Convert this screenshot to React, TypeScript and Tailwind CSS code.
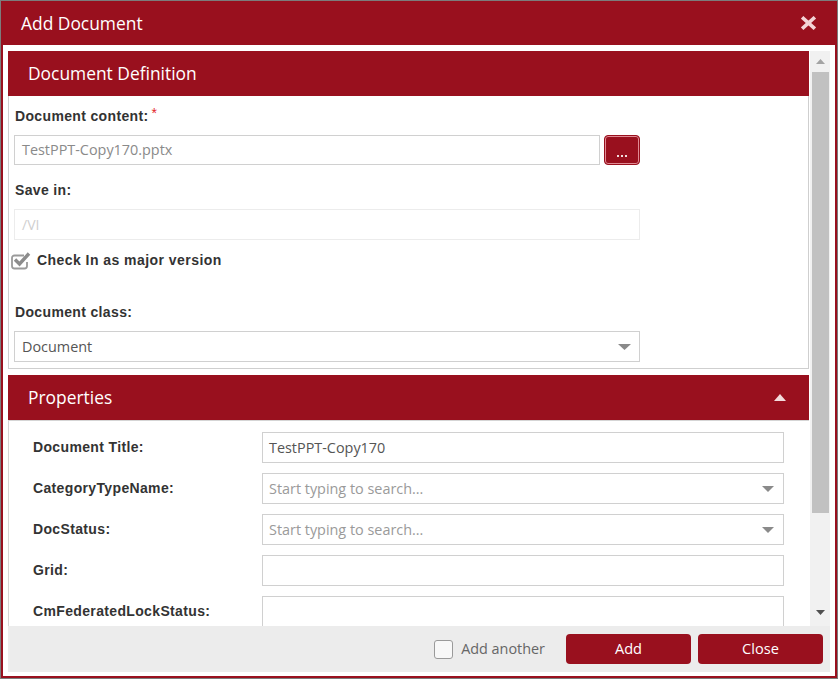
import React from "react";

const RED = "#99101e";

function Tri({ down = true, color = "#8a8a8a", w = 12, h = 6 }: { down?: boolean; color?: string; w?: number; h?: number }) {
  return (
    <svg width={w} height={h} viewBox={`0 0 ${w} ${h}`} className="block">
      {down ? (
        <polygon points={`0,0 ${w},0 ${w / 2},${h}`} fill={color} />
      ) : (
        <polygon points={`0,${h} ${w},${h} ${w / 2},0`} fill={color} />
      )}
    </svg>
  );
}

function Label({ children }: { children: React.ReactNode }) {
  return (
    <div className="h-[20px] flex items-center pl-[1px] text-[14px] font-bold text-[#333] tracking-[0.35px] [font-family:'Liberation_Sans',Arial,sans-serif]">
      {children}
    </div>
  );
}

function PropRow({ label, value, placeholder, dropdown }: { label: string; value?: string; placeholder?: string; dropdown?: boolean }) {
  return (
    <div className="flex items-center h-[31px]">
      <div className="w-[253px] shrink-0 pl-[24px] text-[14px] font-bold text-[#333] tracking-[0.35px] [font-family:'Liberation_Sans',Arial,sans-serif]">
        {label}
      </div>
      <div className="w-[522px] shrink-0 h-[31px] border border-[#d0d0d0] bg-white flex items-center pl-[6px] pr-[9px] [font-family:'Open_Sans',sans-serif] text-[14.4px]">
        <span className={"flex-1 " + (value ? "text-[#555]" : "text-[#9a9a9a]")}>{value ?? placeholder ?? ""}</span>
        {dropdown && <Tri color="#8a8a8a" w={12} h={6} />}
      </div>
    </div>
  );
}

export default function App() {
  return (
    <div className="w-[838px] h-[679px] border border-[#7c7c7c] bg-white flex flex-col overflow-hidden">
      {/* Title bar */}
      <div className="h-[44px] shrink-0 flex items-center justify-between pl-[20px] pr-[21px]" style={{ backgroundColor: RED }}>
        <span className="text-[17.4px] text-white [font-family:'Open_Sans',sans-serif]">Add Document</span>
        <svg width="15" height="14" viewBox="0 0 15 14" className="block">
          <g stroke="#f3d3d6" strokeWidth="3.6" strokeLinecap="square">
            <line x1="2.5" y1="2.5" x2="12.5" y2="11.5" />
            <line x1="12.5" y1="2.5" x2="2.5" y2="11.5" />
          </g>
        </svg>
      </div>

      {/* Body */}
      <div className="flex-1 flex flex-col bg-white border-x-2 border-b-2 border-[#99101e] pl-[5px] pr-[5px] pt-[6px] pb-[4px]">
        <div className="h-[575px] flex">
          {/* Content */}
          <div className="w-[802px] overflow-hidden flex flex-col">
            {/* Document Definition panel */}
            <div className="w-[801px]">
              <div className="h-[45px] flex items-center pl-[20px]" style={{ backgroundColor: RED }}>
                <span className="text-[17.4px] text-white [font-family:'Open_Sans',sans-serif]">Document Definition</span>
              </div>
              <div className="border-x border-b border-[#cfcfcf] pl-[5px] pt-[10px] pb-[6px]">
                <Label>
                  Document content:<span className="text-[#e3262b] font-normal text-[14px] relative top-[-3px] ml-[3px]">*</span>
                </Label>
                <div className="flex mt-[9px] gap-[4px]">
                  <div className="w-[586px] h-[30px] border border-[#d0d0d0] flex items-center pl-[7px] text-[14.4px] text-[#8a8a8a] [font-family:'Open_Sans',sans-serif]">
                    TestPPT-Copy170.pptx
                  </div>
                  <div className="w-[36px] h-[30px] rounded-[4px] border border-[#99101e] shadow-[inset_0_0_0_1px_#e08a93] flex items-end justify-center pb-[7px]" style={{ backgroundColor: RED }}>
                    <div className="flex gap-[2px]">
                      <span className="w-[2px] h-[2px] bg-[#f0dcdc] block" />
                      <span className="w-[2px] h-[2px] bg-[#f0dcdc] block" />
                      <span className="w-[2px] h-[2px] bg-[#f0dcdc] block" />
                    </div>
                  </div>
                </div>
                <div className="mt-[15px]">
                  <Label>Save in:</Label>
                </div>
                <div className="mt-[9px] w-[626px] h-[31px] border border-[#ececec] flex items-center pl-[7px] text-[14px] text-[#cfcfcf] [font-family:'Open_Sans',sans-serif]">
                  /VI
                </div>
                <div className="mt-[10px] h-[20px] flex items-center ml-[-4px]">
                  <svg width="22" height="20" viewBox="0 0 22 20" className="block">
                    <path d="M14 5.5 H4.5 a2.5 2.5 0 0 0 -2.5 2.5 v8 a2.5 2.5 0 0 0 2.5 2.5 h10 a2.5 2.5 0 0 0 2.5 -2.5 v-4" fill="none" stroke="#9a9a9a" strokeWidth="1.8" />
                    <polyline points="5,9.5 9.5,14 19,3.5" fill="none" stroke="#8c8c8c" strokeWidth="3.4" strokeLinejoin="miter" />
                  </svg>
                  <span className="ml-[5px] text-[14px] font-bold text-[#333] tracking-[0.45px] [font-family:'Liberation_Sans',Arial,sans-serif]">
                    Check In as major version
                  </span>
                </div>
                <div className="mt-[32px]">
                  <Label>Document class:</Label>
                </div>
                <div className="mt-[9px] w-[626px] h-[31px] border border-[#d0d0d0] flex items-center pl-[7px] pr-[8px] text-[14.4px] text-[#555] [font-family:'Open_Sans',sans-serif]">
                  <span className="flex-1">Document</span>
                  <Tri color="#8a8a8a" w={13} h={6} />
                </div>
              </div>
            </div>

            {/* Properties panel */}
            <div className="w-[801px] mt-[6px] flex-1 flex flex-col">
              <div className="h-[45px] shrink-0 flex items-center justify-between pl-[20px] pr-[23px]" style={{ backgroundColor: RED }}>
                <span className="text-[17.4px] text-white [font-family:'Open_Sans',sans-serif]">Properties</span>
                <Tri down={false} color="#f3dcdd" w={12} h={7} />
              </div>
              <div className="flex-1 border-t border-l border-[#d5d5d5] pt-[11px] flex flex-col gap-[10px]">
                <PropRow label="Document Title:" value="TestPPT-Copy170" />
                <PropRow label="CategoryTypeName:" placeholder="Start typing to search..." dropdown />
                <PropRow label="DocStatus:" placeholder="Start typing to search..." dropdown />
                <PropRow label="Grid:" />
                <PropRow label="CmFederatedLockStatus:" />
              </div>
            </div>
          </div>

          {/* Scrollbar */}
          <div className="w-[20px] bg-[#f1f1f1] flex flex-col items-center">
            <div className="h-[21px] w-full flex items-center justify-center">
              <Tri down={false} color="#a3a3a3" w={9} h={5} />
            </div>
            <div className="w-[17px] h-[441px] bg-[#c1c1c1] ml-[1px]" />
            <div className="flex-1" />
            <div className="h-[24px] w-full flex items-center justify-center pb-[3px]">
              <Tri color="#505050" w={9} h={5} />
            </div>
          </div>
        </div>

        {/* Footer */}
        <div className="h-[46px] bg-[#ececec] flex items-center justify-end pr-[7px]">
          <div className="w-[19px] h-[19px] rounded-[3px] border border-[#9a9a9a] bg-[#f8f8f8]" />
          <span className="ml-[8px] text-[14.4px] text-[#666] [font-family:'Open_Sans',sans-serif]">Add another</span>
          <button className="ml-[21px] w-[125px] h-[30px] rounded-[4px] text-white text-[14.6px] [font-family:'Open_Sans',sans-serif]" style={{ backgroundColor: RED }}>
            Add
          </button>
          <button className="ml-[7px] w-[125px] h-[30px] rounded-[4px] text-white text-[14.6px] [font-family:'Open_Sans',sans-serif]" style={{ backgroundColor: RED }}>
            Close
          </button>
        </div>
      </div>
    </div>
  );
}
